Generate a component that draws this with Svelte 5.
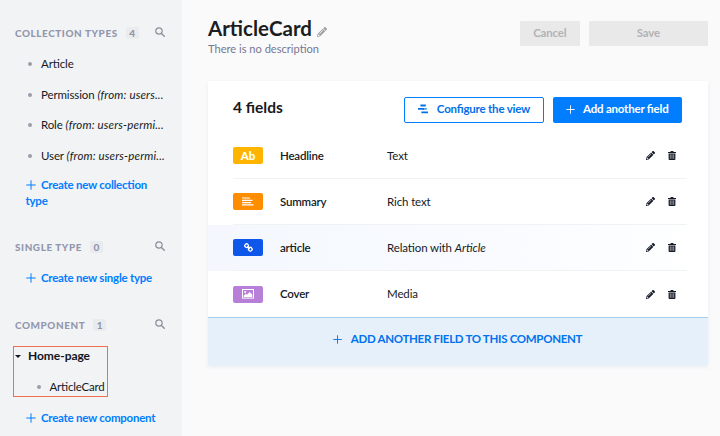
<script>
  const collectionTypes = [
    { name: 'Article' },
    { name: 'Permission', from: '(from: users...' },
    { name: 'Role', from: '(from: users-permi...' },
    { name: 'User', from: '(from: users-permi...' }
  ];
  const fields = [
    { name: 'Headline', type: 'Text', kind: 'text' },
    { name: 'Summary', type: 'Rich text', kind: 'rich' },
    { name: 'article', type: 'Relation with', target: 'Article', kind: 'relation' },
    { name: 'Cover', type: 'Media', kind: 'media' }
  ];
</script>

{#snippet plus()}
  <svg class="plus" viewBox="0 0 10 10"><path d="M5 .3v9.4M.3 5h9.4" fill="none" stroke="currentColor" stroke-width="1" /></svg>
{/snippet}

{#snippet pencil()}
  <svg class="pencil" viewBox="0 0 512 512"><path fill="currentColor" d="M498 142l-46 46c-5 5-13 5-17 0L324 77c-5-5-5-12 0-17l46-46c19-19 49-19 68 0l60 60c19 19 19 49 0 68zm-214-42L22 362 0 484c-3 16 12 30 28 28l122-22 262-262c5-5 5-13 0-17L301 100c-4-5-12-5-17 0zM124 340c-5-6-5-14 0-20l154-154c6-5 14-5 20 0s5 14 0 20L144 340c-6 5-14 5-20 0zm-36 84h48v36l-64 12-32-31 12-65h36v48z" /></svg>
{/snippet}

{#snippet heading(title, count)}
  <div class="heading">
    <span class="title">{title}</span>
    <span class="count">{count}</span>
    <svg class="search" viewBox="0 0 10 10"><circle cx="4" cy="4" r="3.2" fill="none" stroke="currentColor" stroke-width="1.2" /><path d="M6.4 6.4l2.9 2.9" stroke="currentColor" stroke-width="1.4" stroke-linecap="round" /></svg>
  </div>
{/snippet}

<div class="page">
  <aside>
    <section class="collections">
      {@render heading('COLLECTION TYPES', 4)}
      <ul>
        {#each collectionTypes as item}
          <li><i class="dot"></i><span>{item.name}{#if item.from}&nbsp;<em>{item.from}</em>{/if}</span></li>
        {/each}
      </ul>
      <a class="create">{@render plus()}Create new collection type</a>
    </section>
    <section class="singles">
      {@render heading('SINGLE TYPE', 0)}
      <a class="create">{@render plus()}Create new single type</a>
    </section>
    <section class="components">
      {@render heading('COMPONENT', 1)}
      <div class="group">
        <div class="group-name"><i class="caret"></i>Home-page</div>
        <div class="group-item"><i class="dot"></i>ArticleCard</div>
      </div>
      <a class="create">{@render plus()}Create new component</a>
    </section>
  </aside>

  <main>
    <header>
      <div>
        <h1>ArticleCard<span class="edit">{@render pencil()}</span></h1>
        <p>There is no description</p>
      </div>
      <div class="actions">
        <button class="cancel">Cancel</button>
        <button class="save">Save</button>
      </div>
    </header>

    <div class="card">
      <div class="card-head">
        <h2>4 fields</h2>
        <button class="outline">
          <svg class="layout" viewBox="0 0 10 10"><path d="M2.4 1.5h5.4M0 4.9h6M3.4 8.3H10" stroke="currentColor" stroke-width="1.8" /><path d="M5 4.9h3.8" stroke="currentColor" stroke-width="1.2" /></svg>
          Configure the view
        </button>
        <button class="primary">{@render plus()}Add another field</button>
      </div>
      {#each fields as field}
        <div class="row {field.kind}">
          <div class="inner">
            <span class="badge">
              {#if field.kind === 'text'}
                Ab
              {:else if field.kind === 'rich'}
                <svg width="12" height="9" viewBox="0 0 12 9"><path d="M0 1h8M0 3.3h10.5M0 5.6h9M0 7.9h11.5" stroke="#fff" stroke-width="1.2" /></svg>
              {:else if field.kind === 'relation'}
                <svg width="9" height="9" viewBox="0 0 10 10"><g fill="none" stroke="#fff" stroke-width="1.5"><rect x="1" y="1.1" width="3.9" height="3.9" rx="1.7" transform="rotate(45 3 3)" /><rect x="5" y="5" width="3.9" height="3.9" rx="1.7" transform="rotate(45 7 7)" /><path d="M3.7 3.7l2.6 2.6" /></g></svg>
              {:else}
                <svg width="12" height="10" viewBox="0 0 12 10"><rect x=".5" y=".5" width="11" height="8.6" fill="none" stroke="#fff" /><circle cx="3.2" cy="3" r="1" fill="#fff" /><path d="M1.8 7.9V6.4l2-1.7 1.1 1L7.7 3l2.5 2.5v2.4z" fill="#fff" /></svg>
              {/if}
            </span>
            <span class="name">{field.name}</span>
            <span class="type">{field.type}{#if field.target}&nbsp;<em>{field.target}</em>{/if}</span>
            {@render pencil()}
            <svg class="trash" viewBox="0 0 8 9"><path d="M0 1.5h8M2.6.6h2.8" stroke="currentColor" stroke-width="1.1" /><path d="M.6 2.4h6.8v5.7q0 .9-.9.9h-5q-.9 0-.9-.9z" fill="currentColor" /><path d="M2.3 3.3v4.6M4 3.3v4.6M5.7 3.3v4.6" stroke="#fff" stroke-width=".55" /></svg>
          </div>
        </div>
      {/each}
      <div class="add">{@render plus()}ADD ANOTHER FIELD TO THIS COMPONENT</div>
    </div>
  </main>
</div>

<style>
  :global(body) { margin: 0; background: #fafafb; }
  .page {
    display: flex; width: 720px; height: 436px; overflow: hidden;
    background: #fafafb; color: #141a26;
    font: 11.5px/16px Lato, sans-serif;
    letter-spacing: -.12px; font-feature-settings: "liga" 1;
  }
  .page :global(svg) { display: block; flex: none; }
  h1, h2, p, ul { margin: 0; padding: 0; }
  aside { box-sizing: border-box; width: 182px; flex: none; padding-top: 24px; background: #f2f3f4; }
  .heading {
    display: flex; align-items: center; height: 17px; padding: 0 17px 0 15px;
    color: #9197ae; font-size: 9.9px; font-weight: 900; letter-spacing: .6px;
  }
  .count {
    width: 13px; height: 12px; margin-left: 8px; line-height: 12px; text-align: center;
    background: #eaebec; border-radius: 2px; letter-spacing: 0; font-size: 10px;
  }
  .search { width: 10px; height: 10px; margin: -2px 0 0 auto; color: #8b8f9a; }
  ul { list-style: none; padding-top: 7.5px; }
  li { display: flex; align-items: center; height: 30.8px; padding-left: 28px; white-space: nowrap; }
  li em { letter-spacing: .16px; }
  .dot { width: 4px; height: 4px; border-radius: 50%; background: #9b9fa9; flex: none; margin-right: 9px; }
  .create { display: block; padding-left: 25.5px; color: #007eff; font-weight: 700; line-height: 15.5px; letter-spacing: -.25px; }
  .create :global(.plus) { display: inline-block; margin-right: 5.5px; vertical-align: -1px; }
  .plus { width: 10px; height: 10px; }
  .collections { height: 214.5px; }
  .collections .create { width: 130px; margin-top: 5.5px; }
  .singles { height: 78px; }
  .singles .create { margin-top: 14.5px; }
  .group {
    box-sizing: border-box; width: 95px; height: 51px; margin: 12.5px 0 0 13px;
    border: 1px solid #f0704e;
  }
  .group-name { display: flex; align-items: center; height: 18px; padding-left: 1px; font-size: 12px; font-weight: 700; color: #101622; letter-spacing: -.05px; }
  .caret { border: 3px solid transparent; border-top-color: #101622; border-bottom: 0; margin-right: 7px; }
  .group-item { display: flex; align-items: center; height: 44px; padding-left: 22.5px; letter-spacing: -.2px; }
  .components .create { margin-top: 13px; }

  main { flex: 1; padding: 0 12px 0 26px; }
  header { display: flex; justify-content: space-between; height: 81px; box-sizing: border-box; padding-top: 16px; }
  h1 { display: flex; align-items: center; height: 25px; font-size: 20.5px; line-height: 25px; font-weight: 700; letter-spacing: 0; color: #1b1d22; }
  .edit { margin: 6px 0 0 5px; color: #a0a0a5; }
  .pencil { width: 9px; height: 9px; }
  .edit :global(.pencil) { width: 10px; height: 10px; }
  p { color: #777791; font-size: 11.1px; line-height: 15px; letter-spacing: 0; }
  .actions { display: flex; gap: 8.5px; padding-top: 5px; }
  button { box-sizing: border-box; border: 0; padding: 0; font: 700 11.5px/16px Lato, sans-serif; font-feature-settings: "liga" 1; letter-spacing: -.2px; border-radius: 2px; display: flex; align-items: center; justify-content: center; }
  .actions button { height: 25px; padding-bottom: 2px; background: #e9e9ea; color: #b2b3b6; border-radius: 1px; }
  .cancel { width: 60.5px; }
  .save { width: 119.5px; }
  .card { height: 284px; background: #fff; box-shadow: 0 2px 4px #e8ecf3; }
  .card-head { display: flex; height: 52px; box-sizing: border-box; padding: 16px 26px 0 25px; }
  h2 { flex: 1; font-size: 15.5px; line-height: 20px; font-weight: 700; letter-spacing: 0; color: #18191d; }
  .card-head button { height: 26px; padding-bottom: 2px; }
  .outline { width: 140px; border: 1px solid #007eff; color: #0071e8; gap: 9px; background: #fff; }
  .layout { width: 10px; height: 10px; }
  .primary { width: 129.5px; margin-left: 8.5px; background: #007eff; color: #fff; gap: 8px; }
  .primary :global(.plus) { width: 9px; height: 9px; }
  .row { height: 46px; padding: 0 21.5px 0 25px; }
  .inner { box-sizing: border-box; display: flex; align-items: center; height: 46px; border-bottom: 1px solid #f1f2f4; }
  .relation { background: linear-gradient(90deg, #f4f8fe, #f9fbff 60%, #fff); }
  .media .inner { border: 0; }
  .badge { display: flex; align-items: center; justify-content: center; width: 30px; height: 17px; border-radius: 2px; color: #fff; font-weight: 900; font-size: 11.5px; letter-spacing: 0; background: #ffb500; }
  .rich .badge { background: #ff8d00; }
  .relation .badge { background: #0f56ea; }
  .media .badge { background: #b77fd8; }
  .name { width: 107px; margin-left: 17px; font-weight: 600; letter-spacing: -.2px; }
  .type { width: 258.5px; }
  .type em { letter-spacing: 0; }
  .trash { width: 8px; height: 9px; margin-left: 13px; }
  .add {
    box-sizing: border-box; height: 48px; display: flex; align-items: center; justify-content: center; gap: 9px; padding: 0 1px 5px 0;
    background: #e6f0fb; border-top: 1px solid #a9cdee; color: #0072ed; font-weight: 700; letter-spacing: -.3px;
  }
  .add :global(.plus) { width: 9px; height: 9px; }
</style>
